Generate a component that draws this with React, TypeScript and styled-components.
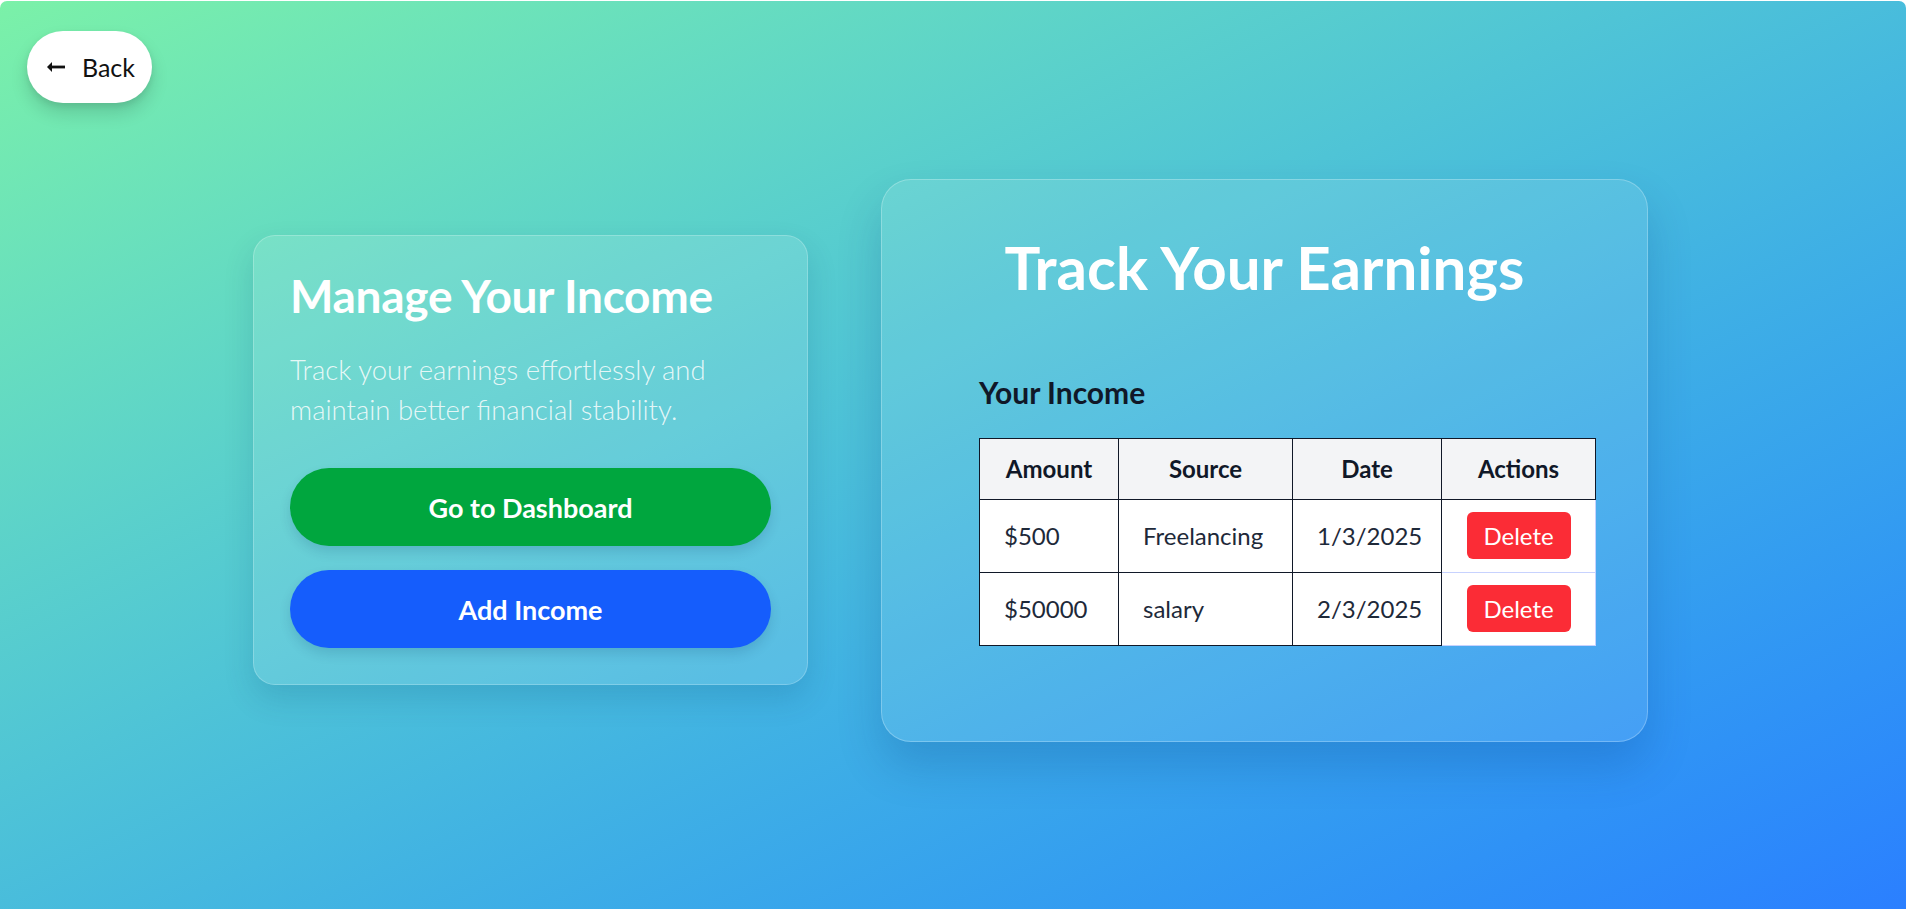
import React from "react";
import styled, { createGlobalStyle } from "styled-components";

const GlobalStyle = createGlobalStyle`
  * { box-sizing: border-box; }
  html, body { margin: 0; padding: 0; background: #ffffff; }
  body { font-family: "Lato", "Noto Sans", sans-serif; }
`;

const Page = styled.div`
  position: relative;
  min-height: 908px;
  margin-top: 1px;
  border-radius: 7px 7px 0 0;
  background: linear-gradient(in oklab to bottom right, #7bf1a8, #2b7fff);
  display: flex;
  align-items: center;
  justify-content: center;
  gap: 73px;
  padding: 10px 5px 0 0;
  overflow: hidden;
`;

const BackButton = styled.button`
  position: absolute;
  top: 30px;
  left: 27px;
  width: 125px;
  height: 72px;
  border: none;
  border-radius: 36px;
  background: #ffffff;
  box-shadow: 0 10px 18px rgba(0, 0, 0, 0.14), 0 3px 6px rgba(0, 0, 0, 0.08);
  display: flex;
  align-items: center;
  justify-content: center;
  gap: 17px;
  font-family: "Lato", sans-serif;
  font-size: 25px;
  color: #111111;
  cursor: pointer;
  padding: 0 0 0 2px;
`;

const Arrow = styled.svg`
  width: 19px;
  height: 12px;
`;

const InfoCard = styled.section`
  width: 555px;
  padding: 32px 36px 36px;
  border-radius: 22px;
  background: rgba(255, 255, 255, 0.12);
  border: 1px solid rgba(255, 255, 255, 0.22);
  box-shadow: 0 14px 30px rgba(0, 60, 110, 0.16);
  display: flex;
  flex-direction: column;
`;

const InfoTitle = styled.h1`
  margin: 0;
  font-size: 46px;
  font-weight: 700;
  color: #ffffff;
  line-height: 56px;
  letter-spacing: -0.3px;
`;

const InfoText = styled.p`
  margin: 26px 0 0;
  font-size: 27.5px;
  font-weight: 300;
  line-height: 40px;
  color: rgba(255, 255, 255, 0.84);
`;

const ButtonStack = styled.div`
  display: flex;
  flex-direction: column;
  gap: 24px;
  margin-top: 38px;
`;

const PillButton = styled.button<{ $bg: string }>`
  height: 78px;
  width: 100%;
  border: none;
  border-radius: 39px;
  background: ${(p) => p.$bg};
  color: #ffffff;
  font-family: "Lato", sans-serif;
  font-size: 27px;
  font-weight: 700;
  box-shadow: 0 6px 12px rgba(0, 40, 90, 0.14);
  cursor: pointer;
`;

const TrackCard = styled.section`
  width: 767px;
  height: 563px;
  padding: 47px 48px 48px;
  border-radius: 30px;
  background: rgba(255, 255, 255, 0.1);
  border: 1px solid rgba(255, 255, 255, 0.25);
  box-shadow: 0 24px 45px rgba(0, 50, 120, 0.2);
  display: flex;
  flex-direction: column;
`;

const TrackTitle = styled.h2`
  margin: 0;
  text-align: center;
  font-size: 60px;
  font-weight: 700;
  color: #ffffff;
  line-height: 80px;
`;

const TableSection = styled.div`
  margin: 67px 0 0 49px;
  width: 616px;
`;

const SectionTitle = styled.h3`
  margin: 0;
  font-size: 30px;
  font-weight: 700;
  color: #101828;
  line-height: 36px;
`;

const Table = styled.table`
  margin-top: 28px;
  width: 616px;
  border-collapse: collapse;
  background: #ffffff;
  table-layout: fixed;
`;

const HeadCell = styled.th<{ $w: number }>`
  width: ${(p) => p.$w}px;
  height: 61px;
  background: #f3f4f6;
  border: 1px solid #101828;
  font-size: 24px;
  font-weight: 700;
  color: #101828;
  text-align: center;
  padding: 0;
`;

const Cell = styled.td<{ $light?: boolean; $center?: boolean }>`
  height: 73px;
  border: 1px solid ${(p) => (p.$light ? "#c7d2fe" : "#101828")};
  padding: 0 ${(p) => (p.$center ? "0" : "24px")};
  font-size: 24px;
  color: #1e2939;
  text-align: ${(p) => (p.$center ? "center" : "left")};
`;

const DeleteButton = styled.button`
  width: 104px;
  height: 47px;
  border: none;
  border-radius: 6px;
  background: #fb2c36;
  color: #ffffff;
  font-family: "Lato", sans-serif;
  font-size: 24px;
  cursor: pointer;
`;

const rows = [
  { amount: "$500", source: "Freelancing", date: "1/3/2025" },
  { amount: "$50000", source: "salary", date: "2/3/2025" },
];

export default function App() {
  return (
    <>
      <GlobalStyle />
      <Page>
        <BackButton>
          <Arrow viewBox="0 0 19 12">
            <path d="M6 1 L1 6 L6 11 Z" fill="#111" />
            <rect x="4" y="4.6" width="15" height="2.8" fill="#111" />
          </Arrow>
          Back
        </BackButton>

        <InfoCard>
          <InfoTitle>Manage Your Income</InfoTitle>
          <InfoText>
            Track your earnings effortlessly and maintain better financial stability.
          </InfoText>
          <ButtonStack>
            <PillButton $bg="#00a63e">Go to Dashboard</PillButton>
            <PillButton $bg="#155dfc">Add Income</PillButton>
          </ButtonStack>
        </InfoCard>

        <TrackCard>
          <TrackTitle>Track Your Earnings</TrackTitle>
          <TableSection>
            <SectionTitle>Your Income</SectionTitle>
            <Table>
              <thead>
                <tr>
                  <HeadCell $w={139}>Amount</HeadCell>
                  <HeadCell $w={174}>Source</HeadCell>
                  <HeadCell $w={149}>Date</HeadCell>
                  <HeadCell $w={154}>Actions</HeadCell>
                </tr>
              </thead>
              <tbody>
                {rows.map((r) => (
                  <tr key={r.amount}>
                    <Cell>{r.amount}</Cell>
                    <Cell>{r.source}</Cell>
                    <Cell>{r.date}</Cell>
                    <Cell $light $center>
                      <DeleteButton>Delete</DeleteButton>
                    </Cell>
                  </tr>
                ))}
              </tbody>
            </Table>
          </TableSection>
        </TrackCard>
      </Page>
    </>
  );
}
